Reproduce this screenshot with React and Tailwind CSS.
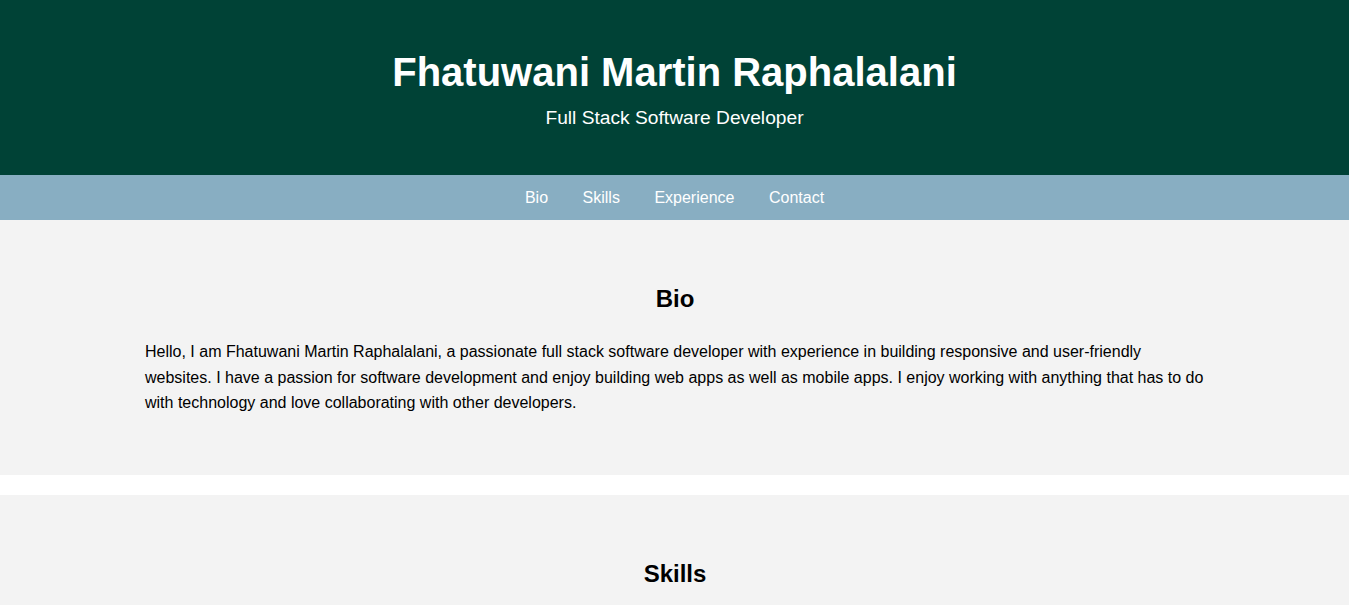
import React from "react";

const links = ["Bio", "Skills", "Experience", "Contact"];

const App = () => {
  return (
    <div className="w-[1349px] bg-white text-black font-['Liberation_Sans',Arial,sans-serif]">
      {/* Header */}
      <header className="bg-[#004236] text-white text-center pt-[49px] pb-[46px]">
        <h1 className="text-[40px] font-bold leading-[46px]">Fhatuwani Martin Raphalalani</h1>
        <p className="text-[19.2px] leading-[22px] mt-[12px]">Full Stack Software Developer</p>
      </header>

      {/* Nav */}
      <nav className="bg-[#88aec2] h-[45px] flex items-center justify-center gap-[34.5px]">
        {links.map((l) => (
          <a key={l} href={`#${l.toLowerCase()}`} className="text-white text-[16px] leading-[18px]">
            {l}
          </a>
        ))}
      </nav>

      {/* Bio */}
      <section id="bio" className="bg-[#f3f3f3] pt-[65px] pb-[59px] pl-[145px] pr-[144px]">
        <h2 className="text-[24px] font-bold text-center leading-[28px] mb-[26px]">Bio</h2>
        <p className="text-[16px] leading-[25.6px]">
          Hello, I am Fhatuwani Martin Raphalalani, a passionate full stack software developer with experience in
          building responsive and user-friendly websites. I have a passion for software development and enjoy
          building web apps as well as mobile apps. I enjoy working with anything that has to do with technology and
          love collaborating with other developers.
        </p>
      </section>

      {/* Skills */}
      <section id="skills" className="bg-[#f3f3f3] mt-[20px] pt-[65px] pb-[59px] pl-[145px] pr-[144px]">
        <h2 className="text-[24px] font-bold text-center leading-[28px] mb-[26px]">Skills</h2>
        <ul className="text-[16px] leading-[25.6px] list-disc pl-[40px]">
          <li>HTML, CSS &amp; JavaScript</li>
          <li>React &amp; Node.js</li>
          <li>Mobile App Development</li>
        </ul>
      </section>
    </div>
  );
};

export default App;
